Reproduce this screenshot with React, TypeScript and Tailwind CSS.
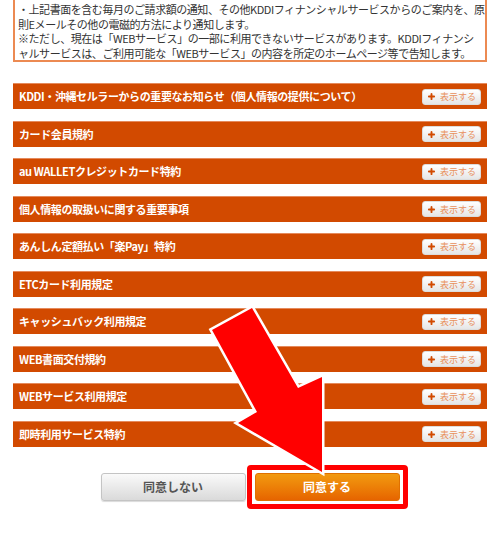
import { Plus } from "lucide-react";

const terms = [
  "KDDI・沖縄セルラーからの重要なお知らせ（個人情報の提供について）",
  "カード会員規約",
  "au WALLETクレジットカード特約",
  "個人情報の取扱いに関する重要事項",
  "あんしん定額払い「楽Pay」特約",
  "ETCカード利用規定",
  "キャッシュバック利用規定",
  "WEB書面交付規約",
  "WEBサービス利用規定",
  "即時利用サービス特約",
];

function TermBar({ label }: { label: string }) {
  return (
    <div className="flex h-[26px] items-center justify-between border-t border-[#e58a5c] bg-[#d24a00] pl-[6px] pr-[6px]">
      <span className="text-[11px] font-bold tracking-[-0.4px] text-white">{label}</span>
      <button className="flex h-[16px] w-[59px] items-center justify-center gap-[4px] rounded-[3px] border border-[#dcdcdc] bg-linear-to-b from-white to-[#e6e6e6]">
        <Plus className="h-[9px] w-[9px] text-[#d24a00]" strokeWidth={5} />
        <span className="text-[9px] leading-none text-[#e8905c]">表示する</span>
      </button>
    </div>
  );
}

export default function App() {
  return (
    <div
      className="relative h-[543px] w-[500px] overflow-hidden bg-white"
      style={{ fontFamily: '"Noto Sans CJK JP", "Noto Sans", sans-serif' }}
    >
      <div className="px-[13px]">
        {/* ---- Notice box (top border cut off) ---- */}
        <div className="border-x-2 border-b-2 border-[#ec8a52] pl-[3px] pt-[2px] text-[11px] leading-[14.5px] tracking-[-0.45px] text-[#333]">
          <p>・上記書面を含む毎月のご請求額の通知、その他KDDIフィナンシャルサービスからのご案内を、原</p>
          <p>則Eメールその他の電磁的方法により通知します。</p>
          <p>※ただし、現在は「WEBサービス」の一部に利用できないサービスがあります。KDDIフィナンシ</p>
          <p>ャルサービスは、ご利用可能な「WEBサービス」の内容を所定のホームページ等で告知します。</p>
        </div>

        {/* ---- Terms list ---- */}
        <div className="mt-[21px] flex flex-col gap-[11.5px]">
          {terms.map((t) => (
            <TermBar key={t} label={t} />
          ))}
        </div>

        {/* ---- Agree buttons ---- */}
        <div className="mt-[26.5px] flex justify-center gap-[9px]">
          <button className="h-[28px] w-[145px] rounded-[3px] border border-[#c4c4c4] bg-linear-to-b from-[#fafafa] to-[#dadada] text-[12px] font-bold text-[#555] shadow-[0_1px_1px_rgba(0,0,0,0.15)]">
            同意しない
          </button>
          <div className="relative">
            <button className="h-[28px] w-[145px] rounded-[3px] border border-[#e07000] bg-linear-to-b from-[#f29a10] to-[#e66400] text-[12px] font-bold text-white">
              同意する
            </button>
            <div className="pointer-events-none absolute -inset-[8px] rounded-[4px] border-[5px] border-[#ff0000]" />
          </div>
        </div>
      </div>

      {/* ---- Red arrow overlay ---- */}
      <svg
        className="pointer-events-none absolute left-0 top-0"
        width="500"
        height="543"
        viewBox="0 0 500 543"
      >
        <polygon
          points="252,308 298,388 322,377 322,472 238,423 257,412 212,330"
          fill="#ff0000"
          stroke="#ffffff"
          strokeWidth="5"
          strokeLinejoin="miter"
          paintOrder="stroke"
        />
      </svg>
    </div>
  );
}
